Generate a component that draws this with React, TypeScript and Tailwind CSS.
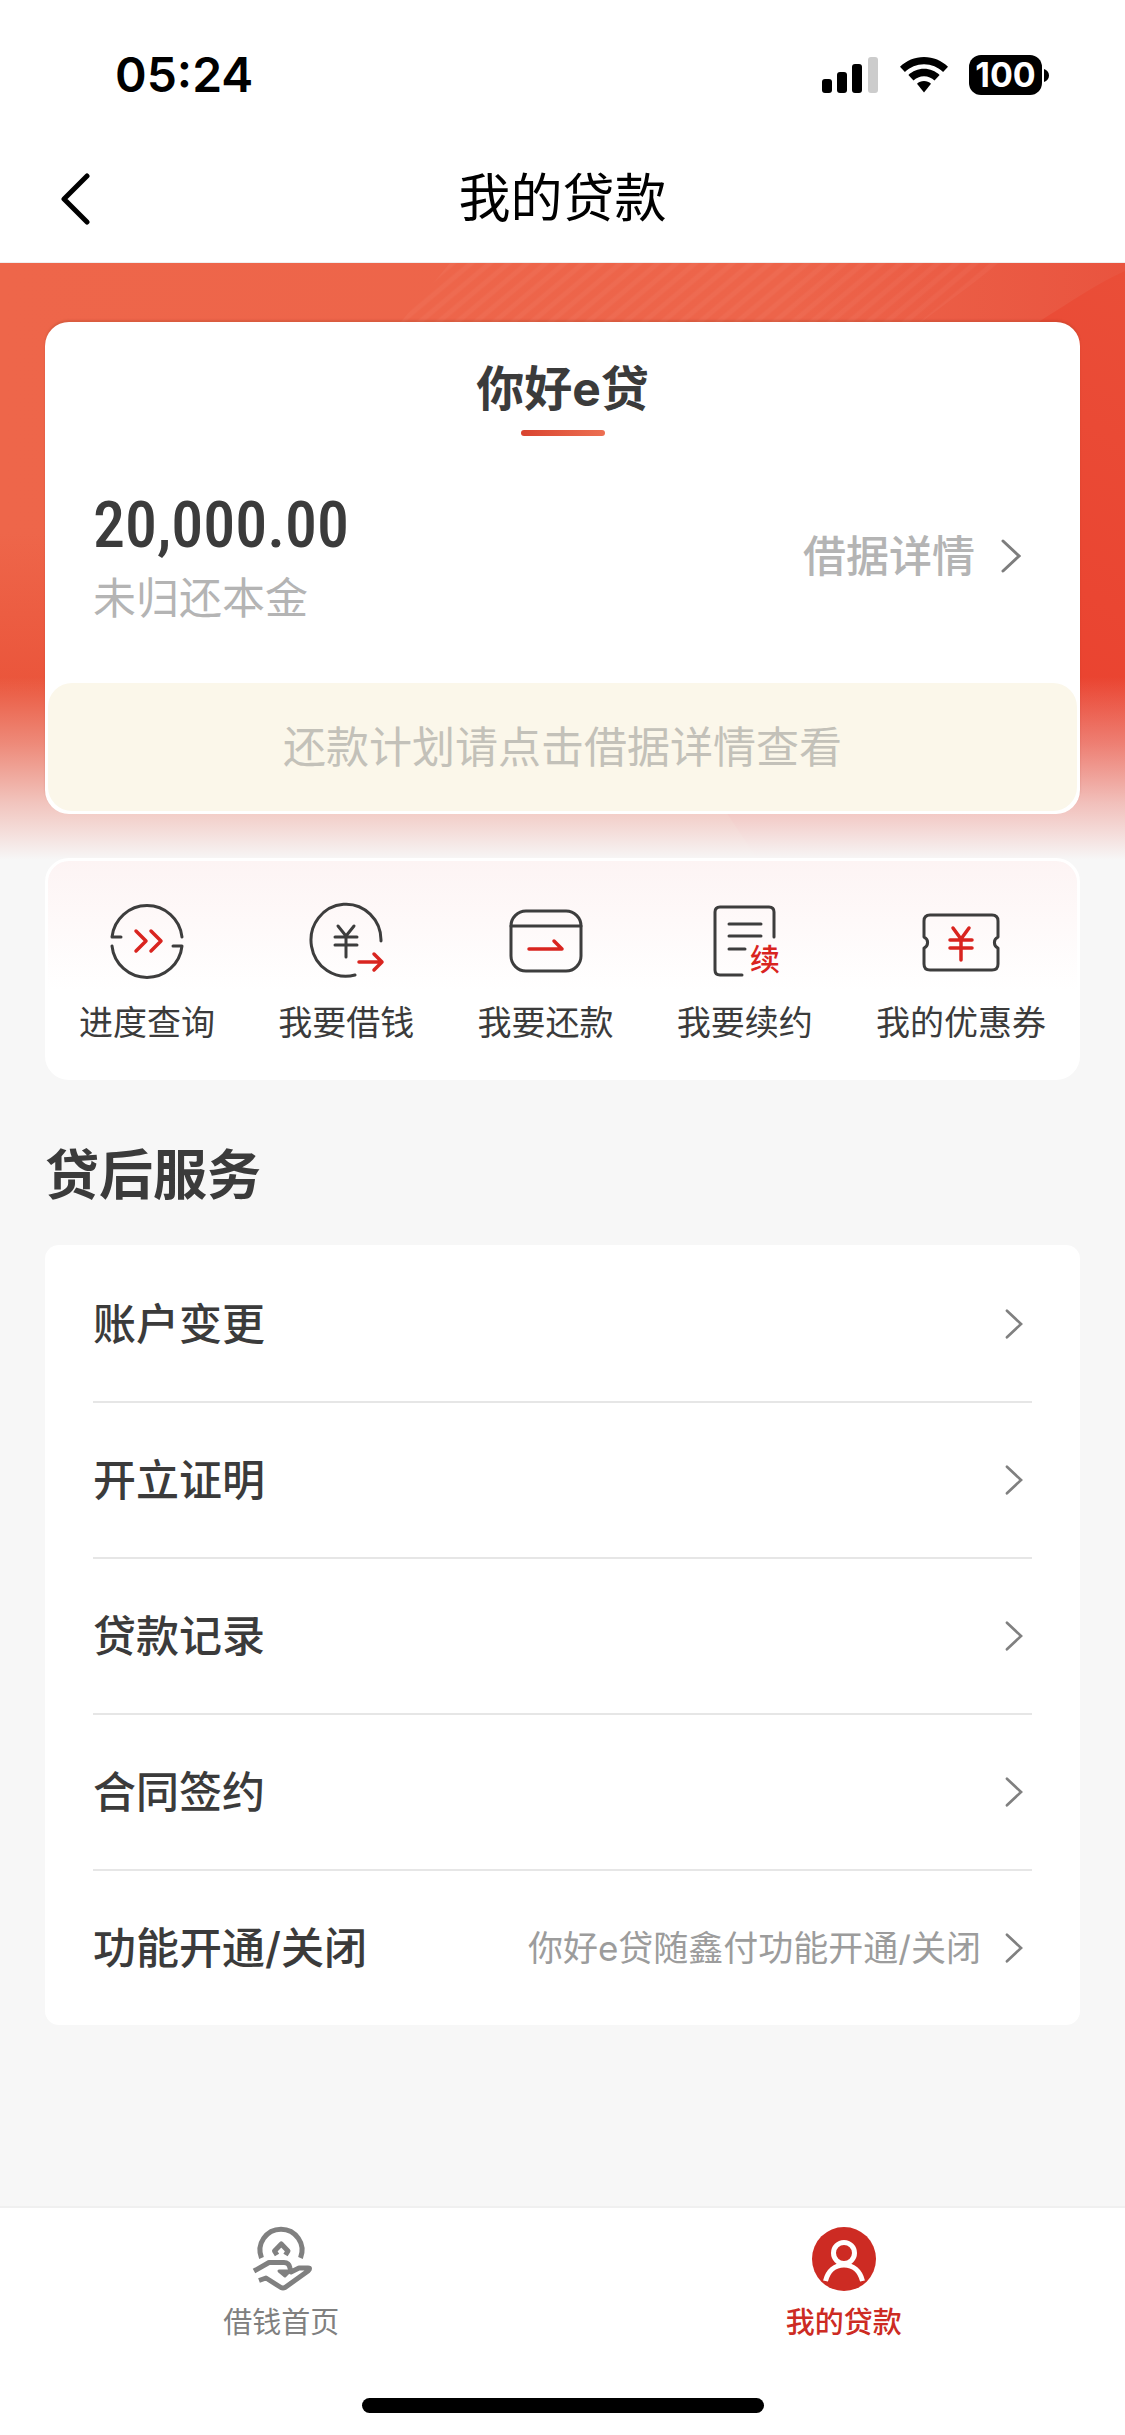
import React from "react";

const FONT = "font-['Inter','Noto_Sans_CJK_SC',sans-serif]";

function Chevron({ className }: { className: string }) {
  return (
    <svg viewBox="0 0 20 34" fill="none" stroke="currentColor" strokeWidth="3" strokeLinecap="round" className={className} aria-hidden="true">
      <path d="M2 2 L18 17 L2 32" />
    </svg>
  );
}

function StatusBar() {
  return (
    <div className="flex h-[150px] items-center justify-between pl-[115px] pr-[76px]">
      <span className="text-[48px] leading-none font-semibold text-black">05:24</span>
      <div className="flex items-center">
        <svg width="56" height="36" viewBox="0 0 56 36" aria-hidden="true">
          <rect x="0" y="22" width="10" height="14" rx="3" />
          <rect x="15" y="15" width="10" height="21" rx="3" />
          <rect x="30" y="7" width="10" height="29" rx="3" />
          <rect x="46" y="0" width="10" height="36" rx="3" fill="#cccccc" />
        </svg>
        <svg width="48" height="36" viewBox="0 0 48 36" className="ml-[22px]" aria-hidden="true">
          <path d="M24 0C14.700 0 6.300 3.700 0 9.700L4.900 15C10 10.200 16.700 7.200 24 7.200S38 10.200 43.100 15L48 9.700C41.700 3.700 33.300 0 24 0Z" />
          <path d="M24 11.800c-6 0-11.500 2.400-15.600 6.200l5.100 5.500c2.700-2.600 6.400-4.200 10.500-4.200s7.800 1.600 10.500 4.200l5.100-5.500C35.500 14.200 30 11.800 24 11.800Z" />
          <path d="M24 24c-2.700 0-5.200 1-7 2.700L24 35.500l7-8.800C29.200 25 26.700 24 24 24Z" />
        </svg>
        <div className="ml-[21px] flex h-10 w-[73px] items-center justify-center rounded-[12px] bg-black text-[34px] leading-none font-bold text-white">
          100
        </div>
        <svg width="5" height="13" viewBox="0 0 5 13" className="ml-[2px]" aria-hidden="true">
          <path d="M0 0C3 1 5 3.500 5 6.500S3 12 0 13Z" />
        </svg>
      </div>
    </div>
  );
}

function HeroArt() {
  return (
    <svg className="absolute inset-0 h-full w-full" viewBox="0 0 1125 600" preserveAspectRatio="none" aria-hidden="true">
      <defs>
        <linearGradient id="base" x1="0" y1="0" x2="1" y2="0">
          <stop offset="0" stopColor="#ee664a" />
          <stop offset="0.7" stopColor="#ed644a" />
          <stop offset="1" stopColor="#e9543f" />
        </linearGradient>
        <linearGradient id="warm" x1="0" y1="0" x2="0" y2="1">
          <stop offset="0.45" stopColor="#ea543a" stopOpacity="0" />
          <stop offset="0.72" stopColor="#ea543a" />
        </linearGradient>
        <linearGradient id="deep" x1="1" y1="0" x2="0.6" y2="1">
          <stop offset="0" stopColor="#ea4e38" />
          <stop offset="1" stopColor="#ea3e2c" />
        </linearGradient>
        <linearGradient id="fade" x1="0" y1="0" x2="0" y2="1">
          <stop offset="0.690" stopColor="#f6e8e8" stopOpacity="0" />
          <stop offset="0.800" stopColor="#f4e8e8" stopOpacity="0.360" />
          <stop offset="0.900" stopColor="#f4ecec" stopOpacity="0.740" />
          <stop offset="0.995" stopColor="#f7f7f7" />
        </linearGradient>
        <pattern id="lines" width="12" height="12" patternUnits="userSpaceOnUse" patternTransform="rotate(50)">
          <path d="M3 0V12" stroke="#ffffff" strokeOpacity="0.040" strokeWidth="5" />
        </pattern>
      </defs>
      <rect width="1125" height="600" fill="url(#base)" />
      <rect width="1125" height="600" fill="url(#warm)" />
      <path d="M450 0H1000L920 60H400Z" fill="url(#lines)" />
      <path d="M1125 8C1098 20 1072 38 1040 58C900 180 720 400 720 540L760 600H1125Z" fill="url(#deep)" />
      <rect width="1125" height="600" fill="url(#fade)" />
    </svg>
  );
}

const INK = "#3d3d3d";
const RED = "#d9241f";

function ProgressIcon() {
  return (
    <svg width="78" height="78" viewBox="0 0 78 78" fill="none" stroke={INK} strokeWidth="3" strokeLinecap="round" strokeLinejoin="round" aria-hidden="true">
      <path d="M13 35H4A35.200 35.200 0 0 1 74 35" />
      <path d="M65 44H74A35.200 35.200 0 0 1 4 44" />
      <path d="M28 29L38 39L28 49M43 29L53 39L43 49" stroke={RED} strokeWidth="3.500" />
    </svg>
  );
}

function BorrowIcon() {
  return (
    <svg width="78" height="78" viewBox="0 0 78 78" fill="none" stroke={INK} strokeWidth="3" strokeLinecap="round" strokeLinejoin="round" aria-hidden="true">
      <path d="M74 39A35 36 0 1 0 48 73" />
      <path d="M31 24L39 34L47 24M28 35H50M28 43H50M39 34V55" />
      <path d="M52 60H75M67 52L75 60L67 68" stroke={RED} strokeWidth="3.500" />
    </svg>
  );
}

function RepayIcon() {
  return (
    <svg width="78" height="78" viewBox="0 0 78 78" fill="none" stroke={INK} strokeWidth="3" strokeLinecap="round" strokeLinejoin="round" aria-hidden="true">
      <rect x="4" y="9" width="70" height="60" rx="15" />
      <path d="M4 24H74" />
      <path d="M22 47H55L47 39" stroke={RED} strokeWidth="3.500" />
    </svg>
  );
}

function RenewIcon() {
  return (
    <svg width="78" height="78" viewBox="0 0 78 78" fill="none" stroke={INK} strokeWidth="3" strokeLinecap="round" strokeLinejoin="round" aria-hidden="true">
      <path d="M68 35V10Q68 5 63 5H14Q9 5 9 10V68Q9 73 14 73H36" />
      <path d="M23 22H55M23 34H55M23 47H39" />
      <text x="44" y="68" fontSize="30" fontWeight="500" fill={RED} stroke="none" className="font-['Noto_Sans_CJK_SC',sans-serif]">续</text>
    </svg>
  );
}

function CouponIcon() {
  return (
    <svg width="78" height="78" viewBox="0 0 78 78" fill="none" stroke={INK} strokeWidth="3" strokeLinejoin="round" strokeLinecap="round" aria-hidden="true">
      <path d="M2 19Q2 13 8 13H70Q76 13 76 19V35A6 6 0 0 0 76 46V62Q76 68 70 68H8Q2 68 2 62V46A6 6 0 0 0 2 35Z" />
      <path d="M31 26L39 37L47 26M28 38H50M28 46H50M39 37V58" stroke={RED} strokeWidth="3.500" />
    </svg>
  );
}

const actions = [
  { label: "进度查询", icon: <ProgressIcon /> },
  { label: "我要借钱", icon: <BorrowIcon /> },
  { label: "我要还款", icon: <RepayIcon /> },
  { label: "我要续约", icon: <RenewIcon /> },
  { label: "我的优惠券", icon: <CouponIcon /> },
];

const services = [
  { label: "账户变更" },
  { label: "开立证明" },
  { label: "贷款记录" },
  { label: "合同签约" },
  { label: "功能开通/关闭", note: "你好e贷随鑫付功能开通/关闭" },
];

export default function App() {
  return (
    <div className={`flex min-h-screen flex-col bg-[#f7f7f7] text-[#3b3b3b] ${FONT}`}>
      <header className="bg-white">
        <StatusBar />
        <div className="grid h-[113px] grid-cols-[150px_1fr_150px] items-start border-b border-[#f0eeee]">
          <button type="button" aria-label="返回" className="flex h-[98px] items-center pl-[60px] text-black">
            <svg width="30" height="52" viewBox="0 0 30 52" fill="none" stroke="currentColor" strokeWidth="5" strokeLinecap="round" strokeLinejoin="round" aria-hidden="true">
              <path d="M27 3L4 26L27 49" />
            </svg>
          </button>
          <h1 className="text-center text-[52px] leading-[98px] font-normal text-black">我的贷款</h1>
        </div>
      </header>

      <main className="relative flex-1 px-[45px] pt-[59px]">
        <div className="absolute inset-x-0 top-0 h-[600px]">
          <HeroArt />
        </div>

        <section className="relative rounded-[24px] bg-white px-[3px] pb-[3px] shadow-[0_-2px_2px_rgba(150,60,30,0.25)]">
          <h2 className="pt-[37px] text-center text-[48px] leading-[60px] font-bold">你好e贷</h2>
          <div className="mx-auto mt-[11px] h-[6px] w-[84px] rounded-full bg-linear-to-r from-[#d9432f] to-[#ec6f52]" />
          <div className="mt-[56px] flex h-[191px] items-start justify-between pr-14 pl-[45px]">
            <div>
              <p className="font-['Roboto_Condensed',Roboto,sans-serif] text-[64px] leading-[68px] font-medium">20,000.00</p>
              <p className="mt-2 text-[43px] leading-[60px] text-[#b4b4b4]">未归还本金</p>
            </div>
            <button type="button" className="mt-[34px] flex items-center gap-[26px] text-[43px] leading-[60px] font-medium text-[#b4b4b4]">
              借据详情
              <Chevron className="h-[34px] w-5 text-[#7d7d7d]" />
            </button>
          </div>
          <p className="rounded-[24px] bg-[#fbf7ea] text-center text-[43px] leading-[128px] text-[#c3c1b9]">还款计划请点击借据详情查看</p>
        </section>

        <nav aria-label="贷款业务" className="relative mt-[44px] flex h-[222px] items-start justify-between rounded-[24px] border-[3px] border-white bg-linear-to-b from-[#fdf4f4] to-white to-60% px-[31px] pt-[41px]">
          {actions.map((a) => (
            <button type="button" key={a.label} className="flex flex-col items-center gap-[18px] text-[34px] leading-[50px]">
              {a.icon}
              {a.label}
            </button>
          ))}
        </nav>

        <section>
          <h2 className="mt-[61px] text-[54px] leading-[70px] font-bold">贷后服务</h2>
          <ul className="mt-[34px] rounded-[14px] bg-white px-[48px] pt-[2px]">
            {services.map((s) => (
              <li key={s.label} className="border-b-2 border-[#e6e6e6] last:border-b-0">
                <button type="button" className="flex h-[154px] w-full items-center pr-[9px] text-left">
                  <span className="flex-1 text-[43px] font-medium">{s.label}</span>
                  {s.note && <span className="mr-6 text-[35px] text-[#9c9c9c]">{s.note}</span>}
                  <Chevron className="h-[30px] w-[18px] text-[#808080]" />
                </button>
              </li>
            ))}
          </ul>
        </section>
      </main>

      <footer className="border-t-2 border-[#f0f0f0] bg-white">
        <nav aria-label="主导航" className="grid h-[190px] grid-cols-2 pt-[18px] text-[29px] leading-[42px]">
          <a href="#home" className="flex flex-col items-center gap-2 text-[#808080]">
            <svg width="68" height="68" viewBox="0 0 68 68" fill="none" stroke="currentColor" strokeWidth="5" strokeLinejoin="round" aria-hidden="true">
              <path d="M14.500 32A21 21 0 1 1 53.500 32" />
              <path d="M30 29L27.500 25L34.300 18L41 25L38.500 29" />
              <path d="M7 45L22 36.500H37Q42 36.500 43 42L44 46L52 42H61Q64 42 61 45L38 61.500Q36 62.500 34 61.500L19 52L12 54.500" />
              <path d="M32 45H43L38 50Z" fill="currentColor" strokeWidth="3" />
            </svg>
            借钱首页
          </a>
          <a href="#loans" aria-current="page" className="flex flex-col items-center gap-2 font-medium text-[#cd2b23]">
            <svg width="68" height="68" viewBox="0 0 68 68" fill="none" aria-hidden="true">
              <circle cx="34" cy="33" r="32" fill="currentColor" />
              <g stroke="#ffffff" strokeWidth="5">
                <circle cx="34" cy="27" r="10.500" />
                <path d="M15.500 55C18 45 25 39 34 39S50 45 52.500 55" />
              </g>
            </svg>
            我的贷款
          </a>
        </nav>
        <div className="mx-auto mb-[22px] h-[15px] w-[402px] rounded-full bg-black" />
      </footer>
    </div>
  );
}
